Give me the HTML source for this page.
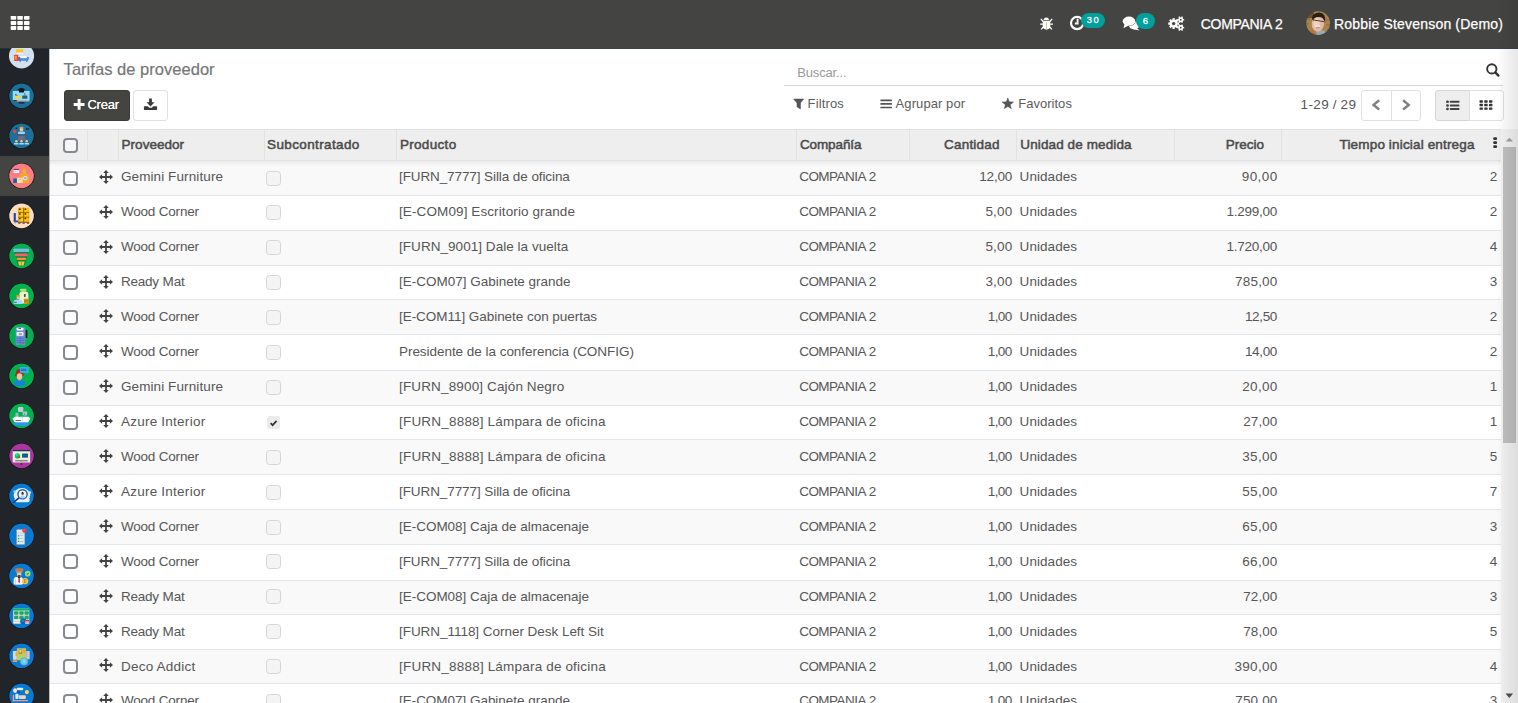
<!DOCTYPE html><html><head><meta charset="utf-8"><title>Tarifas de proveedor</title><style>
*{box-sizing:border-box;margin:0;padding:0}
html,body{width:1518px;height:703px;overflow:hidden;background:#fff;font-family:"Liberation Sans",sans-serif;}
.a{position:absolute}
.t{position:absolute;white-space:pre;}
#nav{left:0;top:0;width:1518px;height:48px;background:#444442}
#side{left:0;top:48px;width:49px;height:655px;background:#21252a;overflow:hidden}
#act{left:0;top:156px;width:49px;height:40px;background:#444442}
.btn{position:absolute;border:1px solid #e0e0e0;border-radius:3px;background:#fff}
.cb{position:absolute;width:15px;height:15px;border:2px solid #868a8e;border-radius:4px;background:rgba(255,255,255,.55)}
.cbd{position:absolute;width:15px;height:15px;border:1px solid #d6d6d6;border-radius:3.5px;background:#f4f4f4}
.row{position:absolute;left:49px;width:1452px}
.ln{position:absolute;left:49px;width:1452px;height:1px;background:#e2e5e9}
.vs{position:absolute;top:130px;width:1px;height:30px;background:#e2e2e2}
</style></head><body>
<div class="a" style="left:49px;top:48px;width:1469px;height:81px;background:#fff"></div>
<span class="t" style="top:60.93px;font-size:16.5px;line-height:16.5px;color:#777;letter-spacing:0.034px;word-spacing:-0.034px;left:63.60px;-webkit-text-stroke:.2px #777;">Tarifas de proveedor</span>
<div class="a" style="left:64px;top:90px;width:66px;height:31px;background:#444442;border:1px solid #3b3b39;border-radius:3px"></div>
<svg class="a" style="left:72px;top:97px" width="14" height="14" viewBox="0 0 14 14"><path d="M5.6 2 h3.0 v3.9 h3.9 v3.0 h-3.9 v3.9 h-3.0 v-3.9 h-3.9 v-3.0 h3.9z" fill="#fff"/></svg>
<span class="t" style="top:97.80px;font-size:13px;line-height:13px;color:#fff;letter-spacing:-0.204px;left:87.40px;text-shadow:0 0 .4px #fff;">Crear</span>
<div class="btn" style="left:133px;top:90px;width:34.5px;height:31px"></div>
<svg class="a" style="left:143px;top:97px" width="15" height="14" viewBox="0 0 15 14"><path d="M6.1 1.6 h2.8 v3.6 h2.6 l-4 4.2 l-4 -4.2 h2.6z" fill="#3a3a3a"/><path d="M1.3 9.2 h3.4 l1.6 1.5 h2.4 l1.6 -1.5 h3.4 q0.4 0 0.4 0.4 v2.9 q0 0.4 -0.4 0.4 h-12.4 q-0.4 0 -0.4 -0.4 v-2.9 q0 -0.4 0.4 -0.4z" fill="#3a3a3a"/></svg>
<span class="t" style="top:65.80px;font-size:13px;line-height:13px;color:#9a9a9a;letter-spacing:-0.147px;left:797.20px;">Buscar...</span>
<div class="a" style="left:784px;top:85px;width:719px;height:1px;background:#d9d9d9"></div>
<svg class="a" style="left:1484px;top:62px" width="18" height="16" viewBox="0 0 18 16"><circle cx="7.8" cy="6.9" r="4.65" fill="none" stroke="#333" stroke-width="1.9"/><path d="M11.3 10.4 L14.4 13.6" stroke="#333" stroke-width="2.3" stroke-linecap="round"/></svg>
<svg class="a" style="left:792px;top:97px" width="14" height="14" viewBox="0 0 14 14"><path d="M1.5 2 H11.7 L8.5 5.9 V12 L5 9.9 V5.9Z" fill="#555" stroke="#555" stroke-width=".5" stroke-linejoin="round"/></svg>
<span class="t" style="top:97.20px;font-size:13px;line-height:13px;color:#5c5c5c;letter-spacing:0.135px;left:807.60px;">Filtros</span>
<svg class="a" style="left:879px;top:97px" width="14" height="14" viewBox="0 0 14 14"><path d="M2.1 3.3H12.2M2.1 6.9H12.2M2.1 10.5H12.2" stroke="#555" stroke-width="1.7" stroke-linecap="round"/></svg>
<span class="t" style="top:97.20px;font-size:13px;line-height:13px;color:#5c5c5c;letter-spacing:0.094px;word-spacing:-0.094px;left:895.60px;">Agrupar por</span>
<svg class="a" style="left:1001px;top:96px" width="14" height="14" viewBox="0 0 14 14"><polygon points="6.80,1.80 8.33,5.80 12.60,6.01 9.27,8.70 10.39,12.84 6.80,10.50 3.21,12.84 4.33,8.70 1.00,6.01 5.27,5.80" fill="#555" stroke="#555" stroke-width=".4" stroke-linejoin="round"/></svg>
<span class="t" style="top:97.20px;font-size:13px;line-height:13px;color:#5c5c5c;letter-spacing:0.029px;left:1018.20px;">Favoritos</span>
<span class="t" style="top:97.57px;font-size:13.5px;line-height:13.5px;color:#555;letter-spacing:0.351px;word-spacing:-0.351px;left:1300.60px;">1-29 / 29</span>
<div class="btn" style="left:1361px;top:90px;width:31px;height:31px;border-radius:3px 0 0 3px"></div>
<div class="btn" style="left:1391px;top:90px;width:30px;height:31px;border-radius:0 3px 3px 0"></div>
<svg class="a" style="left:1370px;top:98px" width="14" height="14" viewBox="0 0 14 14"><path d="M9.2 2.3 L3.6 6.9 L9.2 11.5" fill="none" stroke="#808080" stroke-width="2.5"/></svg>
<svg class="a" style="left:1399px;top:98px" width="14" height="14" viewBox="0 0 14 14"><path d="M4.1 2.3 L9.7 6.9 L4.1 11.5" fill="none" stroke="#808080" stroke-width="2.5"/></svg>
<div class="btn" style="left:1435px;top:90px;width:35px;height:31px;border-radius:3px 0 0 3px;background:#eeeeee;border-color:#d6d6d6"></div>
<div class="btn" style="left:1469px;top:90px;width:34.5px;height:31px;border-radius:0 3px 3px 0"></div>
<svg class="a" style="left:1445px;top:99px" width="16" height="12" viewBox="0 0 16 12"><rect x="1.1" y="1.50" width="2.8" height="2.6" rx="1.2" fill="#444"/><rect x="4.9" y="1.75" width="9.5" height="2.1" rx=".5" fill="#444"/><rect x="1.1" y="5.15" width="2.8" height="2.6" rx="1.2" fill="#444"/><rect x="4.9" y="5.40" width="9.5" height="2.1" rx=".5" fill="#444"/><rect x="1.1" y="8.70" width="2.8" height="2.6" rx="1.2" fill="#444"/><rect x="4.9" y="8.95" width="9.5" height="2.1" rx=".5" fill="#444"/></svg>
<svg class="a" style="left:1478px;top:99px" width="16" height="12" viewBox="0 0 16 12"><rect x="1.50" y="1.20" width="3.4" height="2.45" rx="0.6" fill="#333"/><rect x="6.25" y="1.20" width="3.4" height="2.45" rx="0.6" fill="#333"/><rect x="11.00" y="1.20" width="3.4" height="2.45" rx="0.6" fill="#333"/><rect x="1.50" y="4.80" width="3.4" height="2.45" rx="0.6" fill="#333"/><rect x="6.25" y="4.80" width="3.4" height="2.45" rx="0.6" fill="#333"/><rect x="11.00" y="4.80" width="3.4" height="2.45" rx="0.6" fill="#333"/><rect x="1.50" y="8.40" width="3.4" height="2.45" rx="0.6" fill="#333"/><rect x="6.25" y="8.40" width="3.4" height="2.45" rx="0.6" fill="#333"/><rect x="11.00" y="8.40" width="3.4" height="2.45" rx="0.6" fill="#333"/></svg>
<div class="row" style="top:160px;height:35px;background:#f9f9f9"></div>
<div class="row" style="top:196px;height:34px;background:#ffffff"></div>
<div class="row" style="top:231px;height:34px;background:#f9f9f9"></div>
<div class="row" style="top:266px;height:33px;background:#ffffff"></div>
<div class="row" style="top:300px;height:34px;background:#f9f9f9"></div>
<div class="row" style="top:335px;height:35px;background:#ffffff"></div>
<div class="row" style="top:371px;height:34px;background:#f9f9f9"></div>
<div class="row" style="top:406px;height:33px;background:#ffffff"></div>
<div class="row" style="top:440px;height:34px;background:#f9f9f9"></div>
<div class="row" style="top:475px;height:34px;background:#ffffff"></div>
<div class="row" style="top:510px;height:34px;background:#f9f9f9"></div>
<div class="row" style="top:545px;height:35px;background:#ffffff"></div>
<div class="row" style="top:581px;height:33px;background:#f9f9f9"></div>
<div class="row" style="top:615px;height:34px;background:#ffffff"></div>
<div class="row" style="top:650px;height:33px;background:#f9f9f9"></div>
<div class="row" style="top:684px;height:34px;background:#ffffff"></div>
<div class="ln" style="top:195px"></div>
<div class="ln" style="top:230px"></div>
<div class="ln" style="top:265px"></div>
<div class="ln" style="top:299px"></div>
<div class="ln" style="top:334px"></div>
<div class="ln" style="top:370px"></div>
<div class="ln" style="top:405px"></div>
<div class="ln" style="top:439px"></div>
<div class="ln" style="top:474px"></div>
<div class="ln" style="top:509px"></div>
<div class="ln" style="top:544px"></div>
<div class="ln" style="top:580px"></div>
<div class="ln" style="top:614px"></div>
<div class="ln" style="top:649px"></div>
<div class="ln" style="top:683px"></div>
<div class="cb" style="left:63px;top:171px"></div>
<svg class="a" style="left:99.10px;top:169.85px" width="14" height="14" viewBox="0 0 14 14"><path d="M7 0 L9.8 3.1 H7.9 V6.1 H10.9 V4.2 L14 7 L10.9 9.8 V7.9 H7.9 V10.9 H9.8 L7 14 L4.2 10.9 H6.1 V7.9 H3.1 V9.8 L0 7 L3.1 4.2 V6.1 H6.1 V3.1 H4.2Z" fill="#434343"/></svg>
<span class="t" style="top:170.00px;font-size:13.5px;line-height:13.5px;color:#565656;letter-spacing:0.118px;word-spacing:-0.118px;left:120.90px;">Gemini Furniture</span>
<div class="cbd" style="left:266px;top:171px"></div>
<span class="t" style="top:170.00px;font-size:13.5px;line-height:13.5px;color:#565656;letter-spacing:-0.106px;word-spacing:0.106px;left:399.00px;">[FURN_7777] Silla de oficina</span>
<span class="t" style="top:170.00px;font-size:13.5px;line-height:13.5px;color:#565656;letter-spacing:-0.541px;word-spacing:0.541px;left:799.20px;">COMPANIA 2</span>
<span class="t" style="top:170.00px;font-size:13.5px;line-height:13.5px;color:#565656;letter-spacing:-0.224px;right:506.02px;">12,00</span>
<span class="t" style="top:170.00px;font-size:13.5px;line-height:13.5px;color:#565656;letter-spacing:0.065px;left:1019.60px;">Unidades</span>
<span class="t" style="top:170.00px;font-size:13.5px;line-height:13.5px;color:#565656;letter-spacing:0.451px;right:240.25px;">90,00</span>
<span class="t" style="top:170.00px;font-size:13.5px;line-height:13.5px;color:#565656;right:20.70px;">2</span>
<div class="cb" style="left:63px;top:205px"></div>
<svg class="a" style="left:99.10px;top:204.75px" width="14" height="14" viewBox="0 0 14 14"><path d="M7 0 L9.8 3.1 H7.9 V6.1 H10.9 V4.2 L14 7 L10.9 9.8 V7.9 H7.9 V10.9 H9.8 L7 14 L4.2 10.9 H6.1 V7.9 H3.1 V9.8 L0 7 L3.1 4.2 V6.1 H6.1 V3.1 H4.2Z" fill="#434343"/></svg>
<span class="t" style="top:205.00px;font-size:13.5px;line-height:13.5px;color:#565656;letter-spacing:-0.216px;word-spacing:0.216px;left:120.90px;">Wood Corner</span>
<div class="cbd" style="left:266px;top:205px"></div>
<span class="t" style="top:205.00px;font-size:13.5px;line-height:13.5px;color:#565656;letter-spacing:0.112px;word-spacing:-0.112px;left:399.00px;">[E-COM09] Escritorio grande</span>
<span class="t" style="top:205.00px;font-size:13.5px;line-height:13.5px;color:#565656;letter-spacing:-0.541px;word-spacing:0.541px;left:799.20px;">COMPANIA 2</span>
<span class="t" style="top:205.00px;font-size:13.5px;line-height:13.5px;color:#565656;letter-spacing:0.173px;right:505.63px;">5,00</span>
<span class="t" style="top:205.00px;font-size:13.5px;line-height:13.5px;color:#565656;letter-spacing:0.065px;left:1019.60px;">Unidades</span>
<span class="t" style="top:205.00px;font-size:13.5px;line-height:13.5px;color:#565656;letter-spacing:-0.252px;right:240.95px;">1.299,00</span>
<span class="t" style="top:205.00px;font-size:13.5px;line-height:13.5px;color:#565656;right:20.70px;">2</span>
<div class="cb" style="left:63px;top:240px"></div>
<svg class="a" style="left:99.10px;top:239.65px" width="14" height="14" viewBox="0 0 14 14"><path d="M7 0 L9.8 3.1 H7.9 V6.1 H10.9 V4.2 L14 7 L10.9 9.8 V7.9 H7.9 V10.9 H9.8 L7 14 L4.2 10.9 H6.1 V7.9 H3.1 V9.8 L0 7 L3.1 4.2 V6.1 H6.1 V3.1 H4.2Z" fill="#434343"/></svg>
<span class="t" style="top:240.00px;font-size:13.5px;line-height:13.5px;color:#565656;letter-spacing:-0.216px;word-spacing:0.216px;left:120.90px;">Wood Corner</span>
<div class="cbd" style="left:266px;top:240px"></div>
<span class="t" style="top:240.00px;font-size:13.5px;line-height:13.5px;color:#565656;letter-spacing:0.050px;word-spacing:-0.050px;left:399.00px;">[FURN_9001] Dale la vuelta</span>
<span class="t" style="top:240.00px;font-size:13.5px;line-height:13.5px;color:#565656;letter-spacing:-0.541px;word-spacing:0.541px;left:799.20px;">COMPANIA 2</span>
<span class="t" style="top:240.00px;font-size:13.5px;line-height:13.5px;color:#565656;letter-spacing:0.173px;right:505.63px;">5,00</span>
<span class="t" style="top:240.00px;font-size:13.5px;line-height:13.5px;color:#565656;letter-spacing:0.065px;left:1019.60px;">Unidades</span>
<span class="t" style="top:240.00px;font-size:13.5px;line-height:13.5px;color:#565656;letter-spacing:-0.252px;right:240.95px;">1.720,00</span>
<span class="t" style="top:240.00px;font-size:13.5px;line-height:13.5px;color:#565656;right:20.70px;">4</span>
<div class="cb" style="left:63px;top:275px"></div>
<svg class="a" style="left:99.10px;top:274.55px" width="14" height="14" viewBox="0 0 14 14"><path d="M7 0 L9.8 3.1 H7.9 V6.1 H10.9 V4.2 L14 7 L10.9 9.8 V7.9 H7.9 V10.9 H9.8 L7 14 L4.2 10.9 H6.1 V7.9 H3.1 V9.8 L0 7 L3.1 4.2 V6.1 H6.1 V3.1 H4.2Z" fill="#434343"/></svg>
<span class="t" style="top:275.00px;font-size:13.5px;line-height:13.5px;color:#565656;letter-spacing:-0.212px;word-spacing:0.212px;left:120.90px;">Ready Mat</span>
<div class="cbd" style="left:266px;top:275px"></div>
<span class="t" style="top:275.00px;font-size:13.5px;line-height:13.5px;color:#565656;letter-spacing:-0.011px;word-spacing:0.011px;left:399.00px;">[E-COM07] Gabinete grande</span>
<span class="t" style="top:275.00px;font-size:13.5px;line-height:13.5px;color:#565656;letter-spacing:-0.541px;word-spacing:0.541px;left:799.20px;">COMPANIA 2</span>
<span class="t" style="top:275.00px;font-size:13.5px;line-height:13.5px;color:#565656;letter-spacing:0.173px;right:505.63px;">3,00</span>
<span class="t" style="top:275.00px;font-size:13.5px;line-height:13.5px;color:#565656;letter-spacing:0.065px;left:1019.60px;">Unidades</span>
<span class="t" style="top:275.00px;font-size:13.5px;line-height:13.5px;color:#565656;letter-spacing:0.181px;right:240.52px;">785,00</span>
<span class="t" style="top:275.00px;font-size:13.5px;line-height:13.5px;color:#565656;right:20.70px;">3</span>
<div class="cb" style="left:63px;top:310px"></div>
<svg class="a" style="left:99.10px;top:309.45px" width="14" height="14" viewBox="0 0 14 14"><path d="M7 0 L9.8 3.1 H7.9 V6.1 H10.9 V4.2 L14 7 L10.9 9.8 V7.9 H7.9 V10.9 H9.8 L7 14 L4.2 10.9 H6.1 V7.9 H3.1 V9.8 L0 7 L3.1 4.2 V6.1 H6.1 V3.1 H4.2Z" fill="#434343"/></svg>
<span class="t" style="top:310.00px;font-size:13.5px;line-height:13.5px;color:#565656;letter-spacing:-0.216px;word-spacing:0.216px;left:120.90px;">Wood Corner</span>
<div class="cbd" style="left:266px;top:310px"></div>
<span class="t" style="top:310.00px;font-size:13.5px;line-height:13.5px;color:#565656;letter-spacing:-0.048px;word-spacing:0.048px;left:399.00px;">[E-COM11] Gabinete con puertas</span>
<span class="t" style="top:310.00px;font-size:13.5px;line-height:13.5px;color:#565656;letter-spacing:-0.541px;word-spacing:0.541px;left:799.20px;">COMPANIA 2</span>
<span class="t" style="top:310.00px;font-size:13.5px;line-height:13.5px;color:#565656;letter-spacing:-0.594px;right:506.39px;">1,00</span>
<span class="t" style="top:310.00px;font-size:13.5px;line-height:13.5px;color:#565656;letter-spacing:0.065px;left:1019.60px;">Unidades</span>
<span class="t" style="top:310.00px;font-size:13.5px;line-height:13.5px;color:#565656;letter-spacing:-0.349px;right:241.05px;">12,50</span>
<span class="t" style="top:310.00px;font-size:13.5px;line-height:13.5px;color:#565656;right:20.70px;">2</span>
<div class="cb" style="left:63px;top:345px"></div>
<svg class="a" style="left:99.10px;top:344.35px" width="14" height="14" viewBox="0 0 14 14"><path d="M7 0 L9.8 3.1 H7.9 V6.1 H10.9 V4.2 L14 7 L10.9 9.8 V7.9 H7.9 V10.9 H9.8 L7 14 L4.2 10.9 H6.1 V7.9 H3.1 V9.8 L0 7 L3.1 4.2 V6.1 H6.1 V3.1 H4.2Z" fill="#434343"/></svg>
<span class="t" style="top:345.00px;font-size:13.5px;line-height:13.5px;color:#565656;letter-spacing:-0.216px;word-spacing:0.216px;left:120.90px;">Wood Corner</span>
<div class="cbd" style="left:266px;top:345px"></div>
<span class="t" style="top:345.00px;font-size:13.5px;line-height:13.5px;color:#565656;letter-spacing:-0.046px;word-spacing:0.046px;left:399.00px;">Presidente de la conferencia (CONFIG)</span>
<span class="t" style="top:345.00px;font-size:13.5px;line-height:13.5px;color:#565656;letter-spacing:-0.541px;word-spacing:0.541px;left:799.20px;">COMPANIA 2</span>
<span class="t" style="top:345.00px;font-size:13.5px;line-height:13.5px;color:#565656;letter-spacing:-0.594px;right:506.39px;">1,00</span>
<span class="t" style="top:345.00px;font-size:13.5px;line-height:13.5px;color:#565656;letter-spacing:0.065px;left:1019.60px;">Unidades</span>
<span class="t" style="top:345.00px;font-size:13.5px;line-height:13.5px;color:#565656;letter-spacing:-0.349px;right:241.05px;">14,00</span>
<span class="t" style="top:345.00px;font-size:13.5px;line-height:13.5px;color:#565656;right:20.70px;">2</span>
<div class="cb" style="left:63px;top:380px"></div>
<svg class="a" style="left:99.10px;top:379.25px" width="14" height="14" viewBox="0 0 14 14"><path d="M7 0 L9.8 3.1 H7.9 V6.1 H10.9 V4.2 L14 7 L10.9 9.8 V7.9 H7.9 V10.9 H9.8 L7 14 L4.2 10.9 H6.1 V7.9 H3.1 V9.8 L0 7 L3.1 4.2 V6.1 H6.1 V3.1 H4.2Z" fill="#434343"/></svg>
<span class="t" style="top:380.00px;font-size:13.5px;line-height:13.5px;color:#565656;letter-spacing:0.118px;word-spacing:-0.118px;left:120.90px;">Gemini Furniture</span>
<div class="cbd" style="left:266px;top:380px"></div>
<span class="t" style="top:380.00px;font-size:13.5px;line-height:13.5px;color:#565656;letter-spacing:0.155px;word-spacing:-0.155px;left:399.00px;">[FURN_8900] Cajón Negro</span>
<span class="t" style="top:380.00px;font-size:13.5px;line-height:13.5px;color:#565656;letter-spacing:-0.541px;word-spacing:0.541px;left:799.20px;">COMPANIA 2</span>
<span class="t" style="top:380.00px;font-size:13.5px;line-height:13.5px;color:#565656;letter-spacing:-0.594px;right:506.39px;">1,00</span>
<span class="t" style="top:380.00px;font-size:13.5px;line-height:13.5px;color:#565656;letter-spacing:0.065px;left:1019.60px;">Unidades</span>
<span class="t" style="top:380.00px;font-size:13.5px;line-height:13.5px;color:#565656;letter-spacing:0.301px;right:240.40px;">20,00</span>
<span class="t" style="top:380.00px;font-size:13.5px;line-height:13.5px;color:#565656;right:20.70px;">1</span>
<div class="cb" style="left:63px;top:415px"></div>
<svg class="a" style="left:99.10px;top:414.15px" width="14" height="14" viewBox="0 0 14 14"><path d="M7 0 L9.8 3.1 H7.9 V6.1 H10.9 V4.2 L14 7 L10.9 9.8 V7.9 H7.9 V10.9 H9.8 L7 14 L4.2 10.9 H6.1 V7.9 H3.1 V9.8 L0 7 L3.1 4.2 V6.1 H6.1 V3.1 H4.2Z" fill="#434343"/></svg>
<span class="t" style="top:415.00px;font-size:13.5px;line-height:13.5px;color:#565656;letter-spacing:0.271px;word-spacing:-0.271px;left:120.90px;">Azure Interior</span>
<div class="a" style="left:267px;top:416.20px;width:13px;height:13px;border-radius:2.5px;background:#ebebeb"></div>
<svg class="a" style="left:269.90px;top:420.00px" width="8" height="7" viewBox="0 0 8 7"><path d="M0.6 3.2 L2.6 5.2 L6.6 0.9" fill="none" stroke="#333" stroke-width="1.7"/></svg>
<span class="t" style="top:415.00px;font-size:13.5px;line-height:13.5px;color:#565656;letter-spacing:0.203px;word-spacing:-0.203px;left:399.00px;">[FURN_8888] Lámpara de oficina</span>
<span class="t" style="top:415.00px;font-size:13.5px;line-height:13.5px;color:#565656;letter-spacing:-0.541px;word-spacing:0.541px;left:799.20px;">COMPANIA 2</span>
<span class="t" style="top:415.00px;font-size:13.5px;line-height:13.5px;color:#565656;letter-spacing:-0.594px;right:506.39px;">1,00</span>
<span class="t" style="top:415.00px;font-size:13.5px;line-height:13.5px;color:#565656;letter-spacing:0.065px;left:1019.60px;">Unidades</span>
<span class="t" style="top:415.00px;font-size:13.5px;line-height:13.5px;color:#565656;letter-spacing:0.076px;right:240.62px;">27,00</span>
<span class="t" style="top:415.00px;font-size:13.5px;line-height:13.5px;color:#565656;right:20.70px;">1</span>
<div class="cb" style="left:63px;top:450px"></div>
<svg class="a" style="left:99.10px;top:449.05px" width="14" height="14" viewBox="0 0 14 14"><path d="M7 0 L9.8 3.1 H7.9 V6.1 H10.9 V4.2 L14 7 L10.9 9.8 V7.9 H7.9 V10.9 H9.8 L7 14 L4.2 10.9 H6.1 V7.9 H3.1 V9.8 L0 7 L3.1 4.2 V6.1 H6.1 V3.1 H4.2Z" fill="#434343"/></svg>
<span class="t" style="top:450.00px;font-size:13.5px;line-height:13.5px;color:#565656;letter-spacing:-0.216px;word-spacing:0.216px;left:120.90px;">Wood Corner</span>
<div class="cbd" style="left:266px;top:450px"></div>
<span class="t" style="top:450.00px;font-size:13.5px;line-height:13.5px;color:#565656;letter-spacing:0.203px;word-spacing:-0.203px;left:399.00px;">[FURN_8888] Lámpara de oficina</span>
<span class="t" style="top:450.00px;font-size:13.5px;line-height:13.5px;color:#565656;letter-spacing:-0.541px;word-spacing:0.541px;left:799.20px;">COMPANIA 2</span>
<span class="t" style="top:450.00px;font-size:13.5px;line-height:13.5px;color:#565656;letter-spacing:-0.594px;right:506.39px;">1,00</span>
<span class="t" style="top:450.00px;font-size:13.5px;line-height:13.5px;color:#565656;letter-spacing:0.065px;left:1019.60px;">Unidades</span>
<span class="t" style="top:450.00px;font-size:13.5px;line-height:13.5px;color:#565656;letter-spacing:0.301px;right:240.40px;">35,00</span>
<span class="t" style="top:450.00px;font-size:13.5px;line-height:13.5px;color:#565656;right:20.70px;">5</span>
<div class="cb" style="left:63px;top:485px"></div>
<svg class="a" style="left:99.10px;top:483.95px" width="14" height="14" viewBox="0 0 14 14"><path d="M7 0 L9.8 3.1 H7.9 V6.1 H10.9 V4.2 L14 7 L10.9 9.8 V7.9 H7.9 V10.9 H9.8 L7 14 L4.2 10.9 H6.1 V7.9 H3.1 V9.8 L0 7 L3.1 4.2 V6.1 H6.1 V3.1 H4.2Z" fill="#434343"/></svg>
<span class="t" style="top:485.00px;font-size:13.5px;line-height:13.5px;color:#565656;letter-spacing:0.271px;word-spacing:-0.271px;left:120.90px;">Azure Interior</span>
<div class="cbd" style="left:266px;top:485px"></div>
<span class="t" style="top:485.00px;font-size:13.5px;line-height:13.5px;color:#565656;letter-spacing:-0.089px;word-spacing:0.089px;left:399.00px;">[FURN_7777] Silla de oficina</span>
<span class="t" style="top:485.00px;font-size:13.5px;line-height:13.5px;color:#565656;letter-spacing:-0.541px;word-spacing:0.541px;left:799.20px;">COMPANIA 2</span>
<span class="t" style="top:485.00px;font-size:13.5px;line-height:13.5px;color:#565656;letter-spacing:-0.594px;right:506.39px;">1,00</span>
<span class="t" style="top:485.00px;font-size:13.5px;line-height:13.5px;color:#565656;letter-spacing:0.065px;left:1019.60px;">Unidades</span>
<span class="t" style="top:485.00px;font-size:13.5px;line-height:13.5px;color:#565656;letter-spacing:0.301px;right:240.40px;">55,00</span>
<span class="t" style="top:485.00px;font-size:13.5px;line-height:13.5px;color:#565656;right:20.70px;">7</span>
<div class="cb" style="left:63px;top:520px"></div>
<svg class="a" style="left:99.10px;top:518.85px" width="14" height="14" viewBox="0 0 14 14"><path d="M7 0 L9.8 3.1 H7.9 V6.1 H10.9 V4.2 L14 7 L10.9 9.8 V7.9 H7.9 V10.9 H9.8 L7 14 L4.2 10.9 H6.1 V7.9 H3.1 V9.8 L0 7 L3.1 4.2 V6.1 H6.1 V3.1 H4.2Z" fill="#434343"/></svg>
<span class="t" style="top:520.00px;font-size:13.5px;line-height:13.5px;color:#565656;letter-spacing:-0.216px;word-spacing:0.216px;left:120.90px;">Wood Corner</span>
<div class="cbd" style="left:266px;top:520px"></div>
<span class="t" style="top:520.00px;font-size:13.5px;line-height:13.5px;color:#565656;letter-spacing:-0.021px;word-spacing:0.021px;left:399.00px;">[E-COM08] Caja de almacenaje</span>
<span class="t" style="top:520.00px;font-size:13.5px;line-height:13.5px;color:#565656;letter-spacing:-0.541px;word-spacing:0.541px;left:799.20px;">COMPANIA 2</span>
<span class="t" style="top:520.00px;font-size:13.5px;line-height:13.5px;color:#565656;letter-spacing:-0.594px;right:506.39px;">1,00</span>
<span class="t" style="top:520.00px;font-size:13.5px;line-height:13.5px;color:#565656;letter-spacing:0.065px;left:1019.60px;">Unidades</span>
<span class="t" style="top:520.00px;font-size:13.5px;line-height:13.5px;color:#565656;letter-spacing:0.301px;right:240.40px;">65,00</span>
<span class="t" style="top:520.00px;font-size:13.5px;line-height:13.5px;color:#565656;right:20.70px;">3</span>
<div class="cb" style="left:63px;top:554px"></div>
<svg class="a" style="left:99.10px;top:553.75px" width="14" height="14" viewBox="0 0 14 14"><path d="M7 0 L9.8 3.1 H7.9 V6.1 H10.9 V4.2 L14 7 L10.9 9.8 V7.9 H7.9 V10.9 H9.8 L7 14 L4.2 10.9 H6.1 V7.9 H3.1 V9.8 L0 7 L3.1 4.2 V6.1 H6.1 V3.1 H4.2Z" fill="#434343"/></svg>
<span class="t" style="top:555.00px;font-size:13.5px;line-height:13.5px;color:#565656;letter-spacing:-0.216px;word-spacing:0.216px;left:120.90px;">Wood Corner</span>
<div class="cbd" style="left:266px;top:554px"></div>
<span class="t" style="top:555.00px;font-size:13.5px;line-height:13.5px;color:#565656;letter-spacing:-0.089px;word-spacing:0.089px;left:399.00px;">[FURN_7777] Silla de oficina</span>
<span class="t" style="top:555.00px;font-size:13.5px;line-height:13.5px;color:#565656;letter-spacing:-0.541px;word-spacing:0.541px;left:799.20px;">COMPANIA 2</span>
<span class="t" style="top:555.00px;font-size:13.5px;line-height:13.5px;color:#565656;letter-spacing:-0.594px;right:506.39px;">1,00</span>
<span class="t" style="top:555.00px;font-size:13.5px;line-height:13.5px;color:#565656;letter-spacing:0.065px;left:1019.60px;">Unidades</span>
<span class="t" style="top:555.00px;font-size:13.5px;line-height:13.5px;color:#565656;letter-spacing:0.301px;right:240.40px;">66,00</span>
<span class="t" style="top:555.00px;font-size:13.5px;line-height:13.5px;color:#565656;right:20.70px;">4</span>
<div class="cb" style="left:63px;top:589px"></div>
<svg class="a" style="left:99.10px;top:588.65px" width="14" height="14" viewBox="0 0 14 14"><path d="M7 0 L9.8 3.1 H7.9 V6.1 H10.9 V4.2 L14 7 L10.9 9.8 V7.9 H7.9 V10.9 H9.8 L7 14 L4.2 10.9 H6.1 V7.9 H3.1 V9.8 L0 7 L3.1 4.2 V6.1 H6.1 V3.1 H4.2Z" fill="#434343"/></svg>
<span class="t" style="top:590.00px;font-size:13.5px;line-height:13.5px;color:#565656;letter-spacing:-0.212px;word-spacing:0.212px;left:120.90px;">Ready Mat</span>
<div class="cbd" style="left:266px;top:589px"></div>
<span class="t" style="top:590.00px;font-size:13.5px;line-height:13.5px;color:#565656;letter-spacing:-0.021px;word-spacing:0.021px;left:399.00px;">[E-COM08] Caja de almacenaje</span>
<span class="t" style="top:590.00px;font-size:13.5px;line-height:13.5px;color:#565656;letter-spacing:-0.541px;word-spacing:0.541px;left:799.20px;">COMPANIA 2</span>
<span class="t" style="top:590.00px;font-size:13.5px;line-height:13.5px;color:#565656;letter-spacing:-0.594px;right:506.39px;">1,00</span>
<span class="t" style="top:590.00px;font-size:13.5px;line-height:13.5px;color:#565656;letter-spacing:0.065px;left:1019.60px;">Unidades</span>
<span class="t" style="top:590.00px;font-size:13.5px;line-height:13.5px;color:#565656;letter-spacing:0.076px;right:240.62px;">72,00</span>
<span class="t" style="top:590.00px;font-size:13.5px;line-height:13.5px;color:#565656;right:20.70px;">3</span>
<div class="cb" style="left:63px;top:624px"></div>
<svg class="a" style="left:99.10px;top:623.55px" width="14" height="14" viewBox="0 0 14 14"><path d="M7 0 L9.8 3.1 H7.9 V6.1 H10.9 V4.2 L14 7 L10.9 9.8 V7.9 H7.9 V10.9 H9.8 L7 14 L4.2 10.9 H6.1 V7.9 H3.1 V9.8 L0 7 L3.1 4.2 V6.1 H6.1 V3.1 H4.2Z" fill="#434343"/></svg>
<span class="t" style="top:625.00px;font-size:13.5px;line-height:13.5px;color:#565656;letter-spacing:-0.212px;word-spacing:0.212px;left:120.90px;">Ready Mat</span>
<div class="cbd" style="left:266px;top:624px"></div>
<span class="t" style="top:625.00px;font-size:13.5px;line-height:13.5px;color:#565656;letter-spacing:-0.042px;word-spacing:0.042px;left:399.00px;">[FURN_1118] Corner Desk Left Sit</span>
<span class="t" style="top:625.00px;font-size:13.5px;line-height:13.5px;color:#565656;letter-spacing:-0.541px;word-spacing:0.541px;left:799.20px;">COMPANIA 2</span>
<span class="t" style="top:625.00px;font-size:13.5px;line-height:13.5px;color:#565656;letter-spacing:-0.594px;right:506.39px;">1,00</span>
<span class="t" style="top:625.00px;font-size:13.5px;line-height:13.5px;color:#565656;letter-spacing:0.065px;left:1019.60px;">Unidades</span>
<span class="t" style="top:625.00px;font-size:13.5px;line-height:13.5px;color:#565656;letter-spacing:0.076px;right:240.62px;">78,00</span>
<span class="t" style="top:625.00px;font-size:13.5px;line-height:13.5px;color:#565656;right:20.70px;">5</span>
<div class="cb" style="left:63px;top:659px"></div>
<svg class="a" style="left:99.10px;top:658.45px" width="14" height="14" viewBox="0 0 14 14"><path d="M7 0 L9.8 3.1 H7.9 V6.1 H10.9 V4.2 L14 7 L10.9 9.8 V7.9 H7.9 V10.9 H9.8 L7 14 L4.2 10.9 H6.1 V7.9 H3.1 V9.8 L0 7 L3.1 4.2 V6.1 H6.1 V3.1 H4.2Z" fill="#434343"/></svg>
<span class="t" style="top:660.00px;font-size:13.5px;line-height:13.5px;color:#565656;letter-spacing:0.250px;word-spacing:-0.250px;left:120.90px;">Deco Addict</span>
<div class="cbd" style="left:266px;top:659px"></div>
<span class="t" style="top:660.00px;font-size:13.5px;line-height:13.5px;color:#565656;letter-spacing:0.215px;word-spacing:-0.215px;left:399.00px;">[FURN_8888] Lámpara de oficina</span>
<span class="t" style="top:660.00px;font-size:13.5px;line-height:13.5px;color:#565656;letter-spacing:-0.541px;word-spacing:0.541px;left:799.20px;">COMPANIA 2</span>
<span class="t" style="top:660.00px;font-size:13.5px;line-height:13.5px;color:#565656;letter-spacing:-0.594px;right:506.39px;">1,00</span>
<span class="t" style="top:660.00px;font-size:13.5px;line-height:13.5px;color:#565656;letter-spacing:0.065px;left:1019.60px;">Unidades</span>
<span class="t" style="top:660.00px;font-size:13.5px;line-height:13.5px;color:#565656;letter-spacing:0.321px;right:240.38px;">390,00</span>
<span class="t" style="top:660.00px;font-size:13.5px;line-height:13.5px;color:#565656;right:20.70px;">4</span>
<div class="cb" style="left:63px;top:694px"></div>
<svg class="a" style="left:99.10px;top:693.35px" width="14" height="14" viewBox="0 0 14 14"><path d="M7 0 L9.8 3.1 H7.9 V6.1 H10.9 V4.2 L14 7 L10.9 9.8 V7.9 H7.9 V10.9 H9.8 L7 14 L4.2 10.9 H6.1 V7.9 H3.1 V9.8 L0 7 L3.1 4.2 V6.1 H6.1 V3.1 H4.2Z" fill="#434343"/></svg>
<span class="t" style="top:694.00px;font-size:13.5px;line-height:13.5px;color:#565656;letter-spacing:-0.216px;word-spacing:0.216px;left:120.90px;">Wood Corner</span>
<div class="cbd" style="left:266px;top:694px"></div>
<span class="t" style="top:694.00px;font-size:13.5px;line-height:13.5px;color:#565656;letter-spacing:-0.034px;word-spacing:0.034px;left:399.00px;">[E-COM07] Gabinete grande</span>
<span class="t" style="top:694.00px;font-size:13.5px;line-height:13.5px;color:#565656;letter-spacing:-0.541px;word-spacing:0.541px;left:799.20px;">COMPANIA 2</span>
<span class="t" style="top:694.00px;font-size:13.5px;line-height:13.5px;color:#565656;letter-spacing:-0.594px;right:506.39px;">1,00</span>
<span class="t" style="top:694.00px;font-size:13.5px;line-height:13.5px;color:#565656;letter-spacing:0.065px;left:1019.60px;">Unidades</span>
<span class="t" style="top:694.00px;font-size:13.5px;line-height:13.5px;color:#565656;letter-spacing:0.141px;right:240.56px;">750,00</span>
<span class="t" style="top:694.00px;font-size:13.5px;line-height:13.5px;color:#565656;right:20.70px;">3</span>
<div class="a" style="left:49px;top:160px;width:1452px;height:6px;background:linear-gradient(180deg,rgba(0,0,0,.07),rgba(0,0,0,0))"></div>
<div class="a" style="left:49px;top:129px;width:1452px;height:32px;background:#eeeeee;border-top:1px solid #e0e0e0;border-bottom:1px solid #e2e2e4"></div>
<div class="vs" style="left:87.0px"></div>
<div class="vs" style="left:118.0px"></div>
<div class="vs" style="left:264.0px"></div>
<div class="vs" style="left:396.0px"></div>
<div class="vs" style="left:796.0px"></div>
<div class="vs" style="left:908.5px"></div>
<div class="vs" style="left:1016.0px"></div>
<div class="vs" style="left:1174.0px"></div>
<div class="vs" style="left:1281.0px"></div>
<div class="cb" style="left:63px;top:138px"></div>
<span class="t" style="top:137.77px;font-size:13.5px;line-height:13.5px;color:#4a4a4a;letter-spacing:0.013px;left:121.60px;-webkit-text-stroke:.5px #4a4a4a;">Proveedor</span>
<span class="t" style="top:137.77px;font-size:13.5px;line-height:13.5px;color:#4a4a4a;letter-spacing:0.373px;left:267.00px;-webkit-text-stroke:.5px #4a4a4a;">Subcontratado</span>
<span class="t" style="top:137.77px;font-size:13.5px;line-height:13.5px;color:#4a4a4a;letter-spacing:0.322px;left:399.90px;-webkit-text-stroke:.5px #4a4a4a;">Producto</span>
<span class="t" style="top:137.77px;font-size:13.5px;line-height:13.5px;color:#4a4a4a;letter-spacing:-0.100px;left:799.90px;-webkit-text-stroke:.5px #4a4a4a;">Compañía</span>
<span class="t" style="top:137.77px;font-size:13.5px;line-height:13.5px;color:#4a4a4a;letter-spacing:0.132px;word-spacing:-0.132px;left:1020.30px;-webkit-text-stroke:.5px #4a4a4a;">Unidad de medida</span>
<span class="t" style="top:137.77px;font-size:13.5px;line-height:13.5px;color:#4a4a4a;letter-spacing:0.179px;right:518.42px;-webkit-text-stroke:.5px #4a4a4a;">Cantidad</span>
<span class="t" style="top:137.77px;font-size:13.5px;line-height:13.5px;color:#4a4a4a;letter-spacing:-0.013px;right:254.11px;-webkit-text-stroke:.5px #4a4a4a;">Precio</span>
<span class="t" style="top:137.77px;font-size:13.5px;line-height:13.5px;color:#4a4a4a;letter-spacing:0.180px;word-spacing:-0.180px;right:43.32px;-webkit-text-stroke:.5px #4a4a4a;">Tiempo inicial entrega</span>
<svg class="a" style="left:1492px;top:136px" width="7" height="13" viewBox="0 0 7 13"><rect x="1.2" y="1.2" width="3.9" height="2.8" rx="1.2" fill="#333"/><rect x="1.2" y="5.2" width="3.9" height="2.8" rx="1.2" fill="#333"/><rect x="1.2" y="9.2" width="3.9" height="2.8" rx="1.2" fill="#333"/></svg>
<div class="a" style="left:1501px;top:129px;width:17px;height:574px;background:#f3f3f3"></div>
<div class="a" style="left:1503px;top:147px;width:12.5px;height:296px;background:#c0c0c0"></div>
<svg class="a" style="left:1505px;top:136px" width="9" height="7" viewBox="0 0 9 7"><path d="M0.7 5.6 L4.4 1.7 L8.1 5.6Z" fill="#a0a0a0"/></svg>
<svg class="a" style="left:1505px;top:692px" width="9" height="7" viewBox="0 0 9 7"><path d="M0.5 1.6 L4.3 5.9 L8.1 1.6Z" fill="#505050"/></svg>
<div id="nav" class="a"></div>
<div class="a" style="left:0;top:48px;width:1518px;height:1px;background:#38414c"></div>
<svg class="a" style="left:0px;top:0px" width="49" height="48" viewBox="0 0 49 48"><rect x="10.70" y="15.90" width="5.5" height="3.9" rx="0.7" fill="#fff"/><rect x="17.35" y="15.90" width="5.5" height="3.9" rx="0.7" fill="#fff"/><rect x="24.00" y="15.90" width="5.5" height="3.9" rx="0.7" fill="#fff"/><rect x="10.70" y="21.00" width="5.5" height="3.9" rx="0.7" fill="#fff"/><rect x="17.35" y="21.00" width="5.5" height="3.9" rx="0.7" fill="#fff"/><rect x="24.00" y="21.00" width="5.5" height="3.9" rx="0.7" fill="#fff"/><rect x="10.70" y="26.10" width="5.5" height="3.9" rx="0.7" fill="#fff"/><rect x="17.35" y="26.10" width="5.5" height="3.9" rx="0.7" fill="#fff"/><rect x="24.00" y="26.10" width="5.5" height="3.9" rx="0.7" fill="#fff"/></svg>
<svg class="a" style="left:1034px;top:10px" width="30" height="26" viewBox="0 0 811 703"><path d="M258 268 A76 80 0 0 1 408 268Z" fill="#fff"/><path d="M236 288 H440 V425 Q440 527 338 527 Q236 527 236 425Z" fill="#fff"/><path d="M184 242 L246 310 M492 242 L430 310 M166 385 H242 M434 385 H514 M192 524 L252 460 M484 524 L424 460" stroke="#fff" stroke-width="34"/><rect x="322" y="330" width="28" height="192" fill="#d9c98a"/></svg>
<svg class="a" style="left:1068px;top:14px" width="18" height="18" viewBox="0 0 18 18"><circle cx="9.1" cy="9.05" r="6.1" fill="none" stroke="#fff" stroke-width="2.2"/><path d="M9.6 4.8 V9.5 H6.9" fill="none" stroke="#fff" stroke-width="1.8"/></svg>
<svg class="a" style="left:1120px;top:14px" width="22" height="18" viewBox="0 0 22 18"><ellipse cx="14.2" cy="11.6" rx="5.2" ry="3.9" fill="#fff"/><path d="M16.2 13.5 L19.6 16.5 L13.5 15.2Z" fill="#fff"/><ellipse cx="9" cy="7.2" rx="6.6" ry="4.9" fill="#444442"/><ellipse cx="9" cy="7.2" rx="6.3" ry="4.6" fill="#fff"/><path d="M4.6 10 L3.4 14.2 L8.6 11.6Z" fill="#fff"/></svg>
<svg class="a" style="left:1166px;top:14px" width="22" height="20" viewBox="0 0 22 20"><circle cx="7.65" cy="9.6" r="4.1" fill="#fff"/><path d="M11.35 9.60L13.05 9.60" stroke="#fff" stroke-width="2.27"/><path d="M10.27 12.22L11.47 13.42" stroke="#fff" stroke-width="2.27"/><path d="M7.65 13.30L7.65 15.00" stroke="#fff" stroke-width="2.27"/><path d="M5.03 12.22L3.83 13.42" stroke="#fff" stroke-width="2.27"/><path d="M3.95 9.60L2.25 9.60" stroke="#fff" stroke-width="2.27"/><path d="M5.03 6.98L3.83 5.78" stroke="#fff" stroke-width="2.27"/><path d="M7.65 5.90L7.65 4.20" stroke="#fff" stroke-width="2.27"/><path d="M10.27 6.98L11.47 5.78" stroke="#fff" stroke-width="2.27"/><circle cx="7.65" cy="9.6" r="1.7" fill="#444442"/><circle cx="14.7" cy="5.7" r="2.5" fill="#fff"/><path d="M16.80 5.70L18.20 5.70" stroke="#fff" stroke-width="1.47"/><path d="M15.75 7.52L16.45 8.73" stroke="#fff" stroke-width="1.47"/><path d="M13.65 7.52L12.95 8.73" stroke="#fff" stroke-width="1.47"/><path d="M12.60 5.70L11.20 5.70" stroke="#fff" stroke-width="1.47"/><path d="M13.65 3.88L12.95 2.67" stroke="#fff" stroke-width="1.47"/><path d="M15.75 3.88L16.45 2.67" stroke="#fff" stroke-width="1.47"/><circle cx="14.7" cy="5.7" r="0.9" fill="#444442"/><circle cx="14.7" cy="13.6" r="2.5" fill="#fff"/><path d="M16.80 13.60L18.20 13.60" stroke="#fff" stroke-width="1.47"/><path d="M15.75 15.42L16.45 16.63" stroke="#fff" stroke-width="1.47"/><path d="M13.65 15.42L12.95 16.63" stroke="#fff" stroke-width="1.47"/><path d="M12.60 13.60L11.20 13.60" stroke="#fff" stroke-width="1.47"/><path d="M13.65 11.78L12.95 10.57" stroke="#fff" stroke-width="1.47"/><path d="M15.75 11.78L16.45 10.57" stroke="#fff" stroke-width="1.47"/><circle cx="14.7" cy="13.6" r="0.9" fill="#444442"/></svg>
<div class="a" style="left:1081px;top:13px;width:24.3px;height:15.1px;border-radius:8px;background:#00a09d"></div>
<span class="t" style="top:15.24px;font-size:9.4px;line-height:9.4px;color:#fff;letter-spacing:1.562px;left:1086.80px;-webkit-text-stroke:.3px #fff;">30</span>
<div class="a" style="left:1136px;top:13.4px;width:19px;height:15.5px;border-radius:8px;background:#00a09d"></div>
<span class="t" style="top:15.87px;font-size:9.6px;line-height:9.6px;color:#fff;left:1142.70px;-webkit-text-stroke:.3px #fff;">6</span>
<span class="t" style="top:16.75px;font-size:14px;line-height:14px;color:#fff;letter-spacing:-0.306px;word-spacing:0.306px;left:1200.80px;-webkit-text-stroke:.25px #fff;">COMPANIA 2</span>
<svg class="a" style="left:1306px;top:11px" width="25" height="25" viewBox="0 0 25 25"><defs><clipPath id="av"><circle cx="12.15" cy="12.1" r="11.9"/></clipPath><filter id="avb" x="-10%" y="-10%" width="120%" height="120%"><feGaussianBlur stdDeviation="0.6"/></filter></defs><g clip-path="url(#av)"><g filter="url(#avb)"><rect x="-2" y="-2" width="29" height="29" fill="#a8834c"/><rect x="-2" y="-2" width="10" height="9" fill="#6b4f2e"/><rect x="-2" y="7.5" width="6" height="0.9" fill="#86683c"/><rect x="20" y="8.5" width="7" height="0.9" fill="#86683c"/><rect x="-2" y="12.5" width="5" height="0.9" fill="#86683c"/><rect x="20.5" y="13.5" width="7" height="0.9" fill="#86683c"/><rect x="21" y="18" width="6" height="0.9" fill="#86683c"/><path d="M9 27 L10 19.5 L16 19 Q21.5 21 22.5 27Z" fill="#9aa9ad"/><path d="M0 27 Q1.5 18.5 9.5 18 L11 27Z" fill="#b5743c"/><ellipse cx="11.9" cy="12.6" rx="6.2" ry="8.0" fill="#e2b9a6" transform="rotate(6 11.9 12.6)"/><ellipse cx="10.6" cy="12.2" rx="3.2" ry="5.2" fill="#efd2c5"/><path d="M6.2 8.6 Q5.6 2.2 13 1.6 Q20.4 2.2 19.2 11.6 L18.0 9.0 Q16.5 5.6 12 6.0 Q8 6.2 7.2 9.2Z" fill="#2a1b14"/><path d="M6.8 8.9 L18.0 10.7" stroke="#4e3d38" stroke-width="1.0"/><ellipse cx="11.8" cy="15.2" rx="2.6" ry="1.0" fill="#f2e6e0"/><ellipse cx="11.9" cy="16.6" rx="2.4" ry="0.9" fill="#cf948a"/></g></g></svg>
<span class="t" style="top:16.75px;font-size:14px;line-height:14px;color:#fff;letter-spacing:0.201px;word-spacing:-0.201px;left:1334.00px;-webkit-text-stroke:.25px #fff;">Robbie Stevenson (Demo)</span>
<div id="side" class="a"></div>
<div id="act" class="a"></div>
<div class="a" style="left:49px;top:49px;width:1px;height:654px;background:rgba(33,37,42,.3)"></div>
<div class="a" style="left:0;top:48px;width:49px;height:1px;background:#27313d"></div>
<svg class="a" style="left:4.02px;top:39.93px;overflow:visible" width="36" height="32" viewBox="0 0 843.84 750.08"><defs><clipPath id="c55"><circle cx="411" cy="372" r="292"/></clipPath></defs><circle cx="411" cy="372" r="303" fill="#14171a"/><circle cx="411" cy="372" r="296" fill="#d3e0ee"/><g clip-path="url(#c55)"><g transform="translate(0,-12)"><rect x="280" y="227" width="170" height="80" rx="8" fill="#ffc414"/><rect x="300" y="310" width="150" height="35" rx="0" fill="#f3f3ff"/><rect x="240" y="357" width="90" height="150" rx="10" fill="#e4452f"/><rect x="255" y="380" width="45" height="90" rx="8" fill="#ff9a2a"/><rect x="380" y="385" width="140" height="52" rx="10" fill="#ffffff"/><rect x="360" y="437" width="205" height="63" rx="10" fill="#3b8fe6"/><rect x="330" y="410" width="50" height="90" rx="6" fill="#6a55d0"/><rect x="540" y="410" width="45" height="60" rx="6" fill="#6a7be0"/><rect x="365" y="495" width="25" height="30" rx="0" fill="#5a50c8"/><rect x="520" y="495" width="25" height="30" rx="0" fill="#5a50c8"/></g></g></svg>
<svg class="a" style="left:4.02px;top:79.93px;overflow:visible" width="36" height="32" viewBox="0 0 843.84 750.08"><defs><clipPath id="c95"><circle cx="411" cy="372" r="292"/></clipPath></defs><circle cx="411" cy="372" r="303" fill="#0c0e10"/><circle cx="411" cy="372" r="289" fill="#1e6f97"/><g clip-path="url(#c95)"><rect x="205" y="255" width="395" height="215" rx="6" fill="#8fdcff"/><polygon points="310,215 410,182 505,215 410,250" fill="#15181c"/><rect x="350" y="235" width="120" height="57" rx="10" fill="#15181c"/><rect x="262" y="362" width="126" height="75" rx="8" fill="#ffd42e"/><polygon points="262,362 262,320 330,362" fill="#2a5a78"/><rect x="428" y="362" width="120" height="80" rx="8" fill="#2b5f70"/><rect x="478" y="300" width="22" height="62" rx="0" fill="#6b6a2a"/><rect x="215" y="470" width="380" height="32" rx="0" fill="#c9b3aa"/><rect x="215" y="470" width="85" height="32" rx="0" fill="#3a2c2c"/><rect x="345" y="520" width="135" height="32" rx="0" fill="#142634"/></g></svg>
<svg class="a" style="left:4.02px;top:119.93px;overflow:visible" width="36" height="32" viewBox="0 0 843.84 750.08"><defs><clipPath id="c135"><circle cx="411" cy="372" r="292"/></clipPath></defs><circle cx="411" cy="372" r="303" fill="#0c0e10"/><circle cx="411" cy="372" r="289" fill="#1e6f97"/><g clip-path="url(#c135)"><ellipse cx="410" cy="215" rx="42" ry="52" fill="#f5c48a"/><rect x="365" y="160" width="90" height="40" rx="20" fill="#e0a050"/><rect x="328" y="270" width="164" height="65" rx="26" fill="#8fd4f5"/><rect x="293" y="335" width="239" height="37" rx="6" fill="#55546a"/><rect x="330" y="372" width="160" height="110" rx="0" fill="#6b6a86"/><circle cx="290" cy="497" r="29" fill="#f5c48a" /><circle cx="410" cy="497" r="29" fill="#f5c48a" /><circle cx="530" cy="497" r="29" fill="#f5c48a" /><rect x="235" y="540" width="107" height="37" rx="10" fill="#a8dcf5"/><rect x="356" y="540" width="110" height="37" rx="10" fill="#a8dcf5"/><rect x="480" y="540" width="106" height="37" rx="10" fill="#a8dcf5"/><circle cx="248" cy="270" r="39" fill="#e8443a" /><circle cx="293" cy="195" r="19" fill="#13232f" /><rect x="515" y="185" width="67" height="47" rx="8" fill="#27353f"/></g></svg>
<svg class="a" style="left:4.02px;top:159.93px;overflow:visible" width="36" height="32" viewBox="0 0 843.84 750.08"><defs><clipPath id="c175"><circle cx="411" cy="372" r="292"/></clipPath></defs><circle cx="411" cy="372" r="303" fill="#0c0e10"/><circle cx="411" cy="372" r="289" fill="#f97f85"/><g clip-path="url(#c175)"><rect x="225" y="205" width="130" height="97" rx="6" fill="#eeeeff"/><rect x="225" y="205" width="130" height="27" rx="6" fill="#8a2a6a"/><rect x="245" y="250" width="30" height="40" rx="0" fill="#c8c8ea"/><rect x="295" y="250" width="45" height="40" rx="0" fill="#d8d8f4"/><rect x="440" y="200" width="72" height="130" rx="10" fill="#f2b33a"/><rect x="428" y="195" width="96" height="33" rx="8" fill="#f0a020"/><rect x="365" y="318" width="222" height="224" rx="70" fill="#f6a823"/><rect x="365" y="420" width="222" height="122" rx="12" fill="#f6a823"/><circle cx="497" cy="425" r="50" fill="#e8ecf8" /><circle cx="497" cy="425" r="30" fill="#9ab0e0" /><rect x="218" y="435" width="84" height="107" rx="6" fill="#1560a8"/><rect x="305" y="418" width="135" height="124" rx="6" fill="#f5deb0"/><rect x="355" y="440" width="40" height="30" rx="0" fill="#d8b878"/></g></svg>
<svg class="a" style="left:4.02px;top:199.93px;overflow:visible" width="36" height="32" viewBox="0 0 843.84 750.08"><defs><clipPath id="c215"><circle cx="411" cy="372" r="292"/></clipPath></defs><circle cx="411" cy="372" r="303" fill="#0c0e10"/><circle cx="411" cy="372" r="289" fill="#fbdcc4"/><g clip-path="url(#c215)"><rect x="330" y="180" width="262" height="332" rx="6" fill="#e3a400"/><rect x="350" y="195" width="95" height="80" rx="10" fill="#ffc61c"/><rect x="350" y="305" width="95" height="80" rx="10" fill="#ffc61c"/><rect x="350" y="412" width="95" height="80" rx="10" fill="#ffc61c"/><rect x="480" y="195" width="95" height="80" rx="10" fill="#ffc61c"/><rect x="480" y="305" width="95" height="80" rx="10" fill="#ffc61c"/><rect x="480" y="412" width="95" height="80" rx="10" fill="#ffc61c"/><rect x="352" y="200" width="40" height="34" rx="6" fill="#4a3200"/><rect x="352" y="310" width="40" height="34" rx="6" fill="#4a3200"/><rect x="352" y="415" width="40" height="34" rx="6" fill="#4a3200"/><rect x="482" y="200" width="40" height="34" rx="6" fill="#4a3200"/><rect x="482" y="310" width="40" height="34" rx="6" fill="#4a3200"/><rect x="482" y="415" width="40" height="34" rx="6" fill="#4a3200"/><rect x="330" y="286" width="262" height="10" rx="0" fill="#5a3a00"/><rect x="330" y="397" width="262" height="10" rx="0" fill="#5a3a00"/><rect x="455" y="180" width="11" height="332" rx="0" fill="#5a3a00"/><rect x="330" y="512" width="262" height="20" rx="0" fill="#6b3d10"/><rect x="335" y="530" width="50" height="26" rx="0" fill="#6b3d10"/><rect x="435" y="530" width="50" height="26" rx="0" fill="#6b3d10"/><rect x="538" y="530" width="52" height="26" rx="0" fill="#6b3d10"/><rect x="228" y="305" width="48" height="195" rx="14" fill="#1e3f9a"/><rect x="228" y="478" width="107" height="42" rx="10" fill="#2448a8"/><circle cx="262" cy="528" r="24" fill="#8aa0c0" /></g></svg>
<svg class="a" style="left:4.02px;top:239.93px;overflow:visible" width="36" height="32" viewBox="0 0 843.84 750.08"><defs><clipPath id="c255"><circle cx="411" cy="372" r="292"/></clipPath></defs><circle cx="411" cy="372" r="303" fill="#0c0e10"/><circle cx="411" cy="372" r="289" fill="#04b050"/><g clip-path="url(#c255)"><polygon points="212,192 598,192 482,602 336,602" fill="#0a8440"/><rect x="220" y="200" width="372" height="82" rx="22" fill="#6cc4dc"/><rect x="258" y="318" width="296" height="62" rx="18" fill="#f4606c"/><rect x="298" y="414" width="219" height="53" rx="16" fill="#f5923a"/><polygon points="328,505 484,505 462,597 352,597" fill="#f5c63a"/><rect x="402" y="510" width="12" height="85" rx="0" fill="#9a6a10"/></g></svg>
<svg class="a" style="left:4.02px;top:279.93px;overflow:visible" width="36" height="32" viewBox="0 0 843.84 750.08"><defs><clipPath id="c295"><circle cx="411" cy="372" r="292"/></clipPath></defs><circle cx="411" cy="372" r="303" fill="#0c0e10"/><circle cx="411" cy="372" r="289" fill="#04b050"/><g clip-path="url(#c295)"><rect x="378" y="205" width="144" height="67" rx="14" fill="#b8dc6a"/><rect x="358" y="268" width="214" height="284" rx="80" fill="#e6f5d0"/><rect x="468" y="330" width="38" height="66" rx="8" fill="#454545"/><rect x="468" y="440" width="119" height="116" rx="10" fill="#e08a10"/><rect x="468" y="472" width="119" height="10" rx="0" fill="#b86a08"/><rect x="468" y="508" width="119" height="10" rx="0" fill="#b86a08"/><rect x="288" y="345" width="80" height="55" rx="14" fill="#e08a20"/><rect x="298" y="385" width="62" height="65" rx="14" fill="#f5b8a0"/><rect x="225" y="462" width="207" height="100" rx="60" fill="#a8d8f8"/><rect x="225" y="520" width="207" height="42" rx="0" fill="#a8d8f8"/><rect x="235" y="512" width="65" height="18" rx="0" fill="#2a3a6a"/></g></svg>
<svg class="a" style="left:4.02px;top:319.93px;overflow:visible" width="36" height="32" viewBox="0 0 843.84 750.08"><defs><clipPath id="c335"><circle cx="411" cy="372" r="292"/></clipPath></defs><circle cx="411" cy="372" r="303" fill="#0c0e10"/><circle cx="411" cy="372" r="289" fill="#04b050"/><g clip-path="url(#c335)"><rect x="500" y="228" width="48" height="194" rx="16" fill="#1c1c20"/><rect x="274" y="172" width="228" height="412" rx="18" fill="#6a8fd8"/><rect x="300" y="184" width="152" height="62" rx="10" fill="#f2f2f2"/><rect x="340" y="186" width="60" height="18" rx="0" fill="#222"/><rect x="294" y="284" width="162" height="88" rx="12" fill="#f5f5f5"/><rect x="345" y="318" width="75" height="20" rx="6" fill="#555"/><rect x="290" y="418" width="190" height="18" rx="0" fill="#4a68b0"/><rect x="290" y="470" width="190" height="18" rx="0" fill="#4a68b0"/><rect x="290" y="522" width="190" height="18" rx="0" fill="#4a68b0"/><rect x="372" y="400" width="14" height="180" rx="0" fill="#4a68b0"/><rect x="430" y="530" width="40" height="30" rx="0" fill="#c84a5a"/></g></svg>
<svg class="a" style="left:4.02px;top:359.93px;overflow:visible" width="36" height="32" viewBox="0 0 843.84 750.08"><defs><clipPath id="c375"><circle cx="411" cy="372" r="292"/></clipPath></defs><circle cx="411" cy="372" r="303" fill="#0c0e10"/><circle cx="411" cy="372" r="289" fill="#04b050"/><g clip-path="url(#c375)"><polygon points="262,360 300,230 360,212 470,330 440,392 285,392" fill="#a0301a"/><ellipse cx="365" cy="388" rx="66" ry="76" fill="#f5c0a8"/><rect x="335" y="448" width="60" height="42" rx="0" fill="#e8a890"/><rect x="238" y="478" width="259" height="122" rx="70" fill="#1580e0"/><rect x="238" y="540" width="259" height="60" rx="0" fill="#1580e0"/><rect x="372" y="162" width="206" height="140" rx="22" fill="#3aa8f0"/><polygon points="500,295 560,340 545,290" fill="#3aa8f0"/><rect x="400" y="204" width="122" height="52" rx="8" fill="#2a78b8"/></g></svg>
<svg class="a" style="left:4.02px;top:399.93px;overflow:visible" width="36" height="32" viewBox="0 0 843.84 750.08"><defs><clipPath id="c415"><circle cx="411" cy="372" r="292"/></clipPath></defs><circle cx="411" cy="372" r="303" fill="#0c0e10"/><circle cx="411" cy="372" r="289" fill="#04b050"/><g clip-path="url(#c415)"><rect x="328" y="165" width="124" height="117" rx="26" fill="#c8c8d2"/><rect x="438" y="268" width="104" height="94" rx="22" fill="#b4bfd2"/><circle cx="480" cy="330" r="16" fill="#2a78d0" /><rect x="270" y="300" width="70" height="100" rx="16" fill="#9ab0d0"/><rect x="245" y="498" width="327" height="104" rx="10" fill="#2a98f0"/><polygon points="200,432 250,395 580,395 612,432 570,520 250,520" fill="#ffffff"/><rect x="270" y="470" width="130" height="22" rx="6" fill="#6a6a6a"/><rect x="418" y="400" width="18" height="120" rx="0" fill="#c8d4e0"/></g></svg>
<svg class="a" style="left:4.02px;top:439.93px;overflow:visible" width="36" height="32" viewBox="0 0 843.84 750.08"><defs><clipPath id="c455"><circle cx="411" cy="372" r="292"/></clipPath></defs><circle cx="411" cy="372" r="303" fill="#0c0e10"/><circle cx="411" cy="372" r="289" fill="#a8369e"/><g clip-path="url(#c455)"><rect x="203" y="233" width="409" height="294" rx="10" fill="#efebe0"/><rect x="203" y="233" width="409" height="33" rx="8" fill="#17384a"/><circle cx="315" cy="375" r="62" fill="#00c878" /><rect x="335" y="378" width="43" height="46" rx="6" fill="#d03a1a"/><circle cx="300" cy="350" r="22" fill="#30e0a0" /><rect x="424" y="318" width="138" height="104" rx="6" fill="#1a6a8a"/><rect x="424" y="340" width="138" height="12" rx="0" fill="#0f3a52"/><rect x="424" y="372" width="138" height="12" rx="0" fill="#0f3a52"/><rect x="424" y="402" width="138" height="12" rx="0" fill="#5ad0e8"/><rect x="262" y="468" width="296" height="34" rx="6" fill="#8a8a80"/><circle cx="410" cy="562" r="19" fill="#161626" /></g></svg>
<svg class="a" style="left:4.02px;top:479.93px;overflow:visible" width="36" height="32" viewBox="0 0 843.84 750.08"><defs><clipPath id="c495"><circle cx="411" cy="372" r="292"/></clipPath></defs><circle cx="411" cy="372" r="303" fill="#0c0e10"/><circle cx="411" cy="372" r="289" fill="#0a79d2"/><g clip-path="url(#c495)"><ellipse cx="420" cy="350" rx="195" ry="165" fill="#e4f1ff"/><rect x="250" y="420" width="350" height="100" rx="40" fill="#e4f1ff"/><circle cx="250" cy="270" r="30" fill="#9fd0ff" /><circle cx="600" cy="300" r="34" fill="#cfe6ff" /><path d="M352 420 L222 526" stroke="#1a3f78" stroke-width="40" stroke-linecap="round"/><circle cx="435" cy="335" r="108" fill="#f2f9ff" stroke="#2b5c9c" stroke-width="34"/><ellipse cx="435" cy="318" rx="26" ry="40" fill="#2a2a3a"/><rect x="420" y="338" width="32" height="34" rx="0" fill="#f0b090"/><rect x="385" y="372" width="102" height="58" rx="28" fill="#a8d0f8"/></g></svg>
<svg class="a" style="left:4.02px;top:519.93px;overflow:visible" width="36" height="32" viewBox="0 0 843.84 750.08"><defs><clipPath id="c535"><circle cx="411" cy="372" r="292"/></clipPath></defs><circle cx="411" cy="372" r="303" fill="#0c0e10"/><circle cx="411" cy="372" r="289" fill="#0a79d2"/><g clip-path="url(#c535)"><rect x="283" y="213" width="214" height="374" rx="22" fill="#5a5a5a"/><rect x="295" y="225" width="190" height="350" rx="14" fill="#d8ecf5"/><rect x="320" y="300" width="150" height="12" rx="0" fill="#b0c4d0"/><rect x="325" y="355" width="32" height="32" rx="4" fill="#3a9a3a"/><rect x="372" y="363" width="80" height="14" rx="4" fill="#9ab0bc"/><rect x="325" y="420" width="32" height="32" rx="4" fill="#3a9a3a"/><rect x="372" y="428" width="80" height="14" rx="4" fill="#9ab0bc"/><rect x="325" y="485" width="32" height="32" rx="4" fill="#3a9a3a"/><rect x="372" y="493" width="80" height="14" rx="4" fill="#9ab0bc"/><circle cx="481" cy="245" r="53" fill="#e83a3a" /><circle cx="470" cy="232" r="18" fill="#f46a6a" /></g></svg>
<svg class="a" style="left:4.02px;top:559.93px;overflow:visible" width="36" height="32" viewBox="0 0 843.84 750.08"><defs><clipPath id="c575"><circle cx="411" cy="372" r="292"/></clipPath></defs><circle cx="411" cy="372" r="303" fill="#0c0e10"/><circle cx="411" cy="372" r="289" fill="#0a79d2"/><g clip-path="url(#c575)"><rect x="262" y="192" width="190" height="92" rx="34" fill="#c87838"/><rect x="288" y="262" width="134" height="50" rx="10" fill="#9a9a9a"/><rect x="304" y="298" width="102" height="94" rx="26" fill="#e8c8a0"/><rect x="318" y="352" width="74" height="44" rx="18" fill="#5a4a3a"/><rect x="228" y="398" width="214" height="174" rx="60" fill="#f8f8f8"/><rect x="228" y="500" width="214" height="72" rx="0" fill="#f8f8f8"/><polygon points="318,400 392,400 355,452" fill="#222"/><rect x="336" y="448" width="40" height="84" rx="10" fill="#d83a4a"/><rect x="255" y="470" width="30" height="90" rx="0" fill="#d0d0d8"/><circle cx="496" cy="496" r="73" fill="#f0c850" /><rect x="470" y="450" width="50" height="90" rx="14" fill="#a08020"/><rect x="486" y="462" width="22" height="66" rx="8" fill="#f0d878"/><circle cx="556" cy="320" r="66" fill="#98e078" /><polygon points="520,335 590,292 572,320 548,345" fill="#2a5a2a"/></g></svg>
<svg class="a" style="left:4.02px;top:599.93px;overflow:visible" width="36" height="32" viewBox="0 0 843.84 750.08"><defs><clipPath id="c615"><circle cx="411" cy="372" r="292"/></clipPath></defs><circle cx="411" cy="372" r="303" fill="#0c0e10"/><circle cx="411" cy="372" r="289" fill="#0a79d2"/><g clip-path="url(#c615)"><rect x="213" y="198" width="379" height="359" rx="8" fill="#cfd4c8"/><rect x="213" y="198" width="379" height="49" rx="8" fill="#00b860"/><rect x="236" y="264" width="100" height="82" rx="26" fill="#1fa86a"/><rect x="236" y="370" width="100" height="82" rx="26" fill="#1fa86a"/><rect x="360" y="264" width="100" height="82" rx="26" fill="#1fa86a"/><rect x="360" y="370" width="100" height="82" rx="26" fill="#1fa86a"/><rect x="481" y="264" width="100" height="82" rx="26" fill="#1fa86a"/><rect x="481" y="370" width="100" height="82" rx="26" fill="#1fa86a"/><rect x="225" y="455" width="147" height="92" rx="6" fill="#f7f2e2"/><rect x="225" y="490" width="147" height="10" rx="0" fill="#8a8a80"/><circle cx="452" cy="502" r="72" fill="#0a68b8" /><circle cx="440" cy="490" r="34" fill="#1a82d2" /><rect x="495" y="470" width="92" height="92" rx="10" fill="#e8b0a8"/><rect x="495" y="470" width="92" height="28" rx="8" fill="#c83a3a"/></g></svg>
<svg class="a" style="left:4.02px;top:639.93px;overflow:visible" width="36" height="32" viewBox="0 0 843.84 750.08"><defs><clipPath id="c655"><circle cx="411" cy="372" r="292"/></clipPath></defs><circle cx="411" cy="372" r="303" fill="#0c0e10"/><circle cx="411" cy="372" r="289" fill="#0a79d2"/><g clip-path="url(#c655)"><rect x="208" y="258" width="94" height="204" rx="10" fill="#d8d8e2"/><rect x="520" y="258" width="82" height="194" rx="10" fill="#c8c8da"/><rect x="303" y="193" width="214" height="279" rx="12" fill="#d8c060"/><rect x="345" y="215" width="80" height="115" rx="14" fill="#a88a20"/><rect x="362" y="228" width="46" height="72" rx="10" fill="#e8d070"/><rect x="440" y="240" width="65" height="16" rx="0" fill="#b09a40"/><rect x="440" y="275" width="65" height="16" rx="0" fill="#b09a40"/><rect x="272" y="290" width="40" height="90" rx="12" fill="#d8b030"/><rect x="328" y="362" width="154" height="80" rx="30" fill="#98e068"/><rect x="203" y="474" width="109" height="43" rx="16" fill="#f0a050"/><circle cx="470" cy="502" r="86" fill="#58d0f8" stroke="#9a9a9a" stroke-width="20"/><polygon points="440,520 470,440 505,520" fill="#8ae4ff"/></g></svg>
<svg class="a" style="left:4.02px;top:679.93px;overflow:visible" width="36" height="32" viewBox="0 0 843.84 750.08"><defs><clipPath id="c695"><circle cx="411" cy="372" r="292"/></clipPath></defs><circle cx="411" cy="372" r="303" fill="#0c0e10"/><circle cx="411" cy="372" r="289" fill="#0a79d2"/><g clip-path="url(#c695)"><rect x="298" y="181" width="154" height="57" rx="26" fill="#d8f0ff"/><ellipse cx="260" cy="248" rx="46" ry="56" fill="#ffe0c0"/><circle cx="536" cy="284" r="49" fill="#ffd84a" /><circle cx="342" cy="278" r="36" fill="#0a58a8" /><rect x="205" y="346" width="31" height="152" rx="8" fill="#f09a80"/><rect x="205" y="466" width="357" height="32" rx="8" fill="#f09a80"/><rect x="265" y="324" width="77" height="124" rx="24" fill="#d0e8ff"/><rect x="348" y="356" width="164" height="92" rx="24" fill="#f0d0c0"/></g></svg>
<div class="a" style="left:0;top:0;width:49px;height:48px;background:#444442"></div>
<svg class="a" style="left:0px;top:0px" width="49" height="48" viewBox="0 0 49 48"><rect x="10.70" y="15.90" width="5.5" height="3.9" rx="0.7" fill="#fff"/><rect x="17.35" y="15.90" width="5.5" height="3.9" rx="0.7" fill="#fff"/><rect x="24.00" y="15.90" width="5.5" height="3.9" rx="0.7" fill="#fff"/><rect x="10.70" y="21.00" width="5.5" height="3.9" rx="0.7" fill="#fff"/><rect x="17.35" y="21.00" width="5.5" height="3.9" rx="0.7" fill="#fff"/><rect x="24.00" y="21.00" width="5.5" height="3.9" rx="0.7" fill="#fff"/><rect x="10.70" y="26.10" width="5.5" height="3.9" rx="0.7" fill="#fff"/><rect x="17.35" y="26.10" width="5.5" height="3.9" rx="0.7" fill="#fff"/><rect x="24.00" y="26.10" width="5.5" height="3.9" rx="0.7" fill="#fff"/></svg>
<div class="a" style="left:1497px;top:0;width:21px;height:703px;background:linear-gradient(90deg,rgba(0,0,0,0),rgba(0,0,0,.03) 30%,rgba(0,0,0,.095))"></div>
</body></html>
